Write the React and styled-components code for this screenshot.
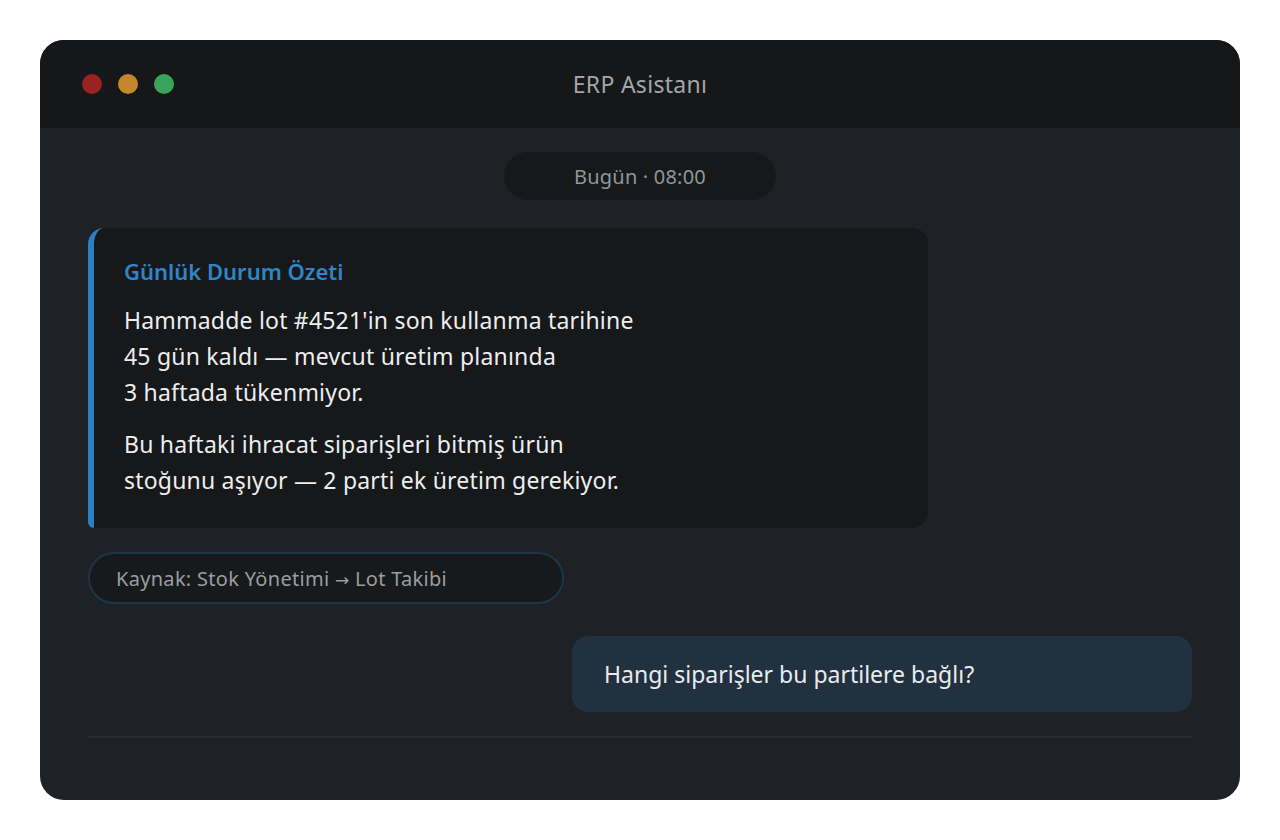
import React from "react";
import styled, { createGlobalStyle } from "styled-components";

const Global = createGlobalStyle`
  html, body { margin: 0; padding: 0; background: #ffffff; }
  body { font-family: "Noto Sans", "Open Sans", sans-serif; }
  * { box-sizing: border-box; }
`;

const Page = styled.div`
  width: 1280px;
  height: 840px;
  padding: 40px;
`;

const Window = styled.div`
  width: 1200px;
  height: 760px;
  border-radius: 24px;
  overflow: hidden;
  background: #1e2125;
  display: flex;
  flex-direction: column;
`;

const TitleBar = styled.div`
  height: 88px;
  flex: none;
  background: #161719;
  display: grid;
  grid-template-columns: 1fr auto 1fr;
  align-items: center;
  padding: 0 42px;
`;

const Dots = styled.div`
  display: flex;
  gap: 16px;
`;

const Dot = styled.span`
  width: 20px;
  height: 20px;
  border-radius: 50%;
  background: ${(p) => p.$color};
`;

const Title = styled.div`
  color: #a3a6aa;
  font-size: 23px;
  letter-spacing: 0.3px;
`;

const Stamp = styled.div`
  align-self: center;
  width: 272px;
  height: 48px;
  border-radius: 24px;
  background: #161819;
  color: #92969a;
  font-size: 20px;
  letter-spacing: 0.2px;
  display: flex;
  align-items: center;
  justify-content: center;
`;

const Body = styled.div`
  flex: 1;
  display: flex;
  flex-direction: column;
  padding: 24px 48px 0;
`;

const Card = styled.div`
  margin-top: 28px;
  width: 840px;
  background: #17181a;
  border-left: 6px solid #2e7fbd;
  border-radius: 16px 16px 16px 6px;
  padding: 28px 30px 30px 30px;
`;

const CardHeading = styled.div`
  color: #2f86c6;
  font-size: 22px;
  font-weight: 600;
  line-height: 30px;
  margin-bottom: 16px;
`;

const Para = styled.p`
  margin: 0;
  color: #eceef0;
  font-size: 23px;
  letter-spacing: 0.2px;
  line-height: 36px;
  & + & { margin-top: 16px; }
`;

const Source = styled.div`
  margin-top: 24px;
  width: 476px;
  height: 52px;
  border-radius: 26px;
  border: 2px solid #1c3649;
  background: #17191b;
  color: #9a9ea2;
  font-size: 20px;
  letter-spacing: 0.3px;
  display: flex;
  align-items: center;
  padding-left: 26px;
`;

const Arrow = styled.span`
  font-family: "DejaVu Sans", sans-serif;
  font-size: 17px;
`;

const UserBubble = styled.div`
  margin-top: 32px;
  align-self: flex-end;
  width: 620px;
  height: 76px;
  border-radius: 16px;
  background: #22313f;
  color: #e8ecef;
  font-size: 23px;
  display: flex;
  align-items: center;
  padding-left: 32px;
`;

const Divider = styled.div`
  margin-top: 24px;
  height: 2px;
  background: #272b30;
`;

export default function App() {
  return (
    <Page>
      <Global />
      <Window>
        <TitleBar>
          <Dots>
            <Dot $color="#9b2222" />
            <Dot $color="#c4872e" />
            <Dot $color="#3aa35a" />
          </Dots>
          <Title>ERP Asistanı</Title>
          <span />
        </TitleBar>
        <Body>
          <Stamp>Bugün · 08:00</Stamp>
          <Card>
            <CardHeading>Günlük Durum Özeti</CardHeading>
            <Para>
              Hammadde lot #4521'in son kullanma tarihine
              <br />
              45 gün kaldı — mevcut üretim planında
              <br />3 haftada tükenmiyor.
            </Para>
            <Para>
              Bu haftaki ihracat siparişleri bitmiş ürün
              <br />
              stoğunu aşıyor — 2 parti ek üretim gerekiyor.
            </Para>
          </Card>
          <Source>
            <span>
              Kaynak: Stok Yönetimi <Arrow>→</Arrow> Lot Takibi
            </span>
          </Source>
          <UserBubble>Hangi siparişler bu partilere bağlı?</UserBubble>
          <Divider />
        </Body>
      </Window>
    </Page>
  );
}
